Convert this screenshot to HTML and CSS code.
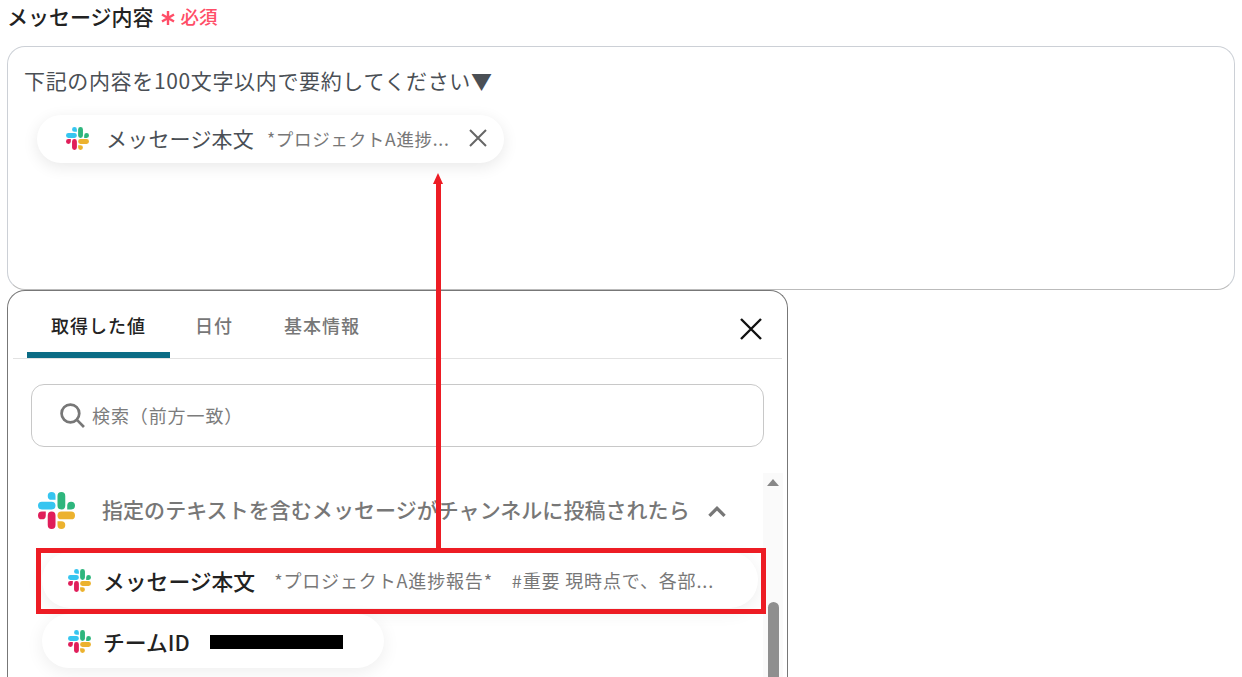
FILE: index.html
```html
<!DOCTYPE html>
<html lang="ja"><head>
<meta charset="utf-8">
<title>メッセージ内容</title>
<link rel="stylesheet" href="styles.css">
</head><body>

<svg class="defs" width="0" height="0">
	<symbol id="slack" viewBox="0 0 24 24">
		<path fill="#e01e5a" d="M5.042 15.165a2.528 2.528 0 0 1-2.52 2.523A2.528 2.528 0 0 1 0 15.165a2.527 2.527 0 0 1 2.522-2.52h2.52v2.52zM6.313 15.165a2.527 2.527 0 0 1 2.521-2.52 2.527 2.527 0 0 1 2.521 2.52v6.313A2.528 2.528 0 0 1 8.834 24a2.528 2.528 0 0 1-2.521-2.522v-6.313z"/>
		<path fill="#36c5f0" d="M8.834 5.042a2.528 2.528 0 0 1-2.521-2.52A2.528 2.528 0 0 1 8.834 0a2.528 2.528 0 0 1 2.521 2.522v2.52H8.834zM8.834 6.313a2.528 2.528 0 0 1 2.521 2.521 2.528 2.528 0 0 1-2.521 2.521H2.522A2.528 2.528 0 0 1 0 8.834a2.528 2.528 0 0 1 2.522-2.521h6.312z"/>
		<path fill="#2eb67d" d="M18.956 8.834a2.528 2.528 0 0 1 2.522-2.521A2.528 2.528 0 0 1 24 8.834a2.528 2.528 0 0 1-2.522 2.521h-2.522V8.834zM17.688 8.834a2.528 2.528 0 0 1-2.523 2.521 2.527 2.527 0 0 1-2.52-2.521V2.522A2.527 2.527 0 0 1 15.165 0a2.528 2.528 0 0 1 2.523 2.522v6.312z"/>
		<path fill="#ecb22e" d="M15.165 18.956a2.528 2.528 0 0 1 2.523 2.522A2.528 2.528 0 0 1 15.165 24a2.527 2.527 0 0 1-2.52-2.522v-2.522h2.52zM15.165 17.688a2.527 2.527 0 0 1-2.52-2.523 2.526 2.526 0 0 1 2.52-2.52h6.313A2.527 2.527 0 0 1 24 15.165a2.528 2.528 0 0 1-2.522 2.523h-6.313z"/>
	</symbol>
</svg>

<div class="page">
	<div class="label">
		<span>メッセージ内容</span>
		<svg class="req-star" viewBox="0 0 14 14"><path d="M7 0V14M1 3.5L13 10.5M13 3.5L1 10.5"/></svg>
		<span class="req">必須</span>
	</div>

	<div class="editor">
		<div class="editor-text">下記の内容を100文字以内で要約してください▼</div>
		<div class="chip">
			<svg class="icon-s"><use href="#slack"/></svg>
			<span class="chip-name">メッセージ本文</span>
			<span class="chip-val">*プロジェクトA進捗...</span>
			<svg class="chip-x" viewBox="0 0 18 18"><path d="M1 1L17 17M17 1L1 17"/></svg>
		</div>
	</div>

	<div class="panel">
		<div class="tabs">
			<div class="tab tab-on">取得した値</div>
			<div class="tab">日付</div>
			<div class="tab tab-last">基本情報</div>
			<svg class="panel-x" viewBox="0 0 22 22"><path d="M1 1L21 21M21 1L1 21"/></svg>
		</div>

		<div class="search">
			<svg class="search-icon" viewBox="0 0 24 24"><circle cx="10" cy="10" r="8.5"/><path d="M16 16L23 23"/></svg>
			<span>検索（前方一致）</span>
		</div>

		<div class="body">
			<div class="list">
				<div class="group">
					<svg class="icon-l"><use href="#slack"/></svg>
					<span class="group-title">指定のテキストを含むメッセージがチャンネルに投稿されたら</span>
					<svg class="chev" viewBox="0 0 18 12"><path d="M2 10L9 3L16 10"/></svg>
				</div>
				<div class="pill pill-wide">
					<svg class="icon-m"><use href="#slack"/></svg>
					<span class="pill-name">メッセージ本文</span>
					<span class="pill-val">*プロジェクトA進捗報告*　#重要 現時点で、各部...</span>
				</div>
				<div class="pill pill-short">
					<svg class="icon-m"><use href="#slack"/></svg>
					<span class="pill-name">チームID</span>
					<span class="masked"></span>
				</div>
			</div>
			<div class="scrollbar">
				<div class="scroll-up"></div>
				<div class="scroll-thumb"></div>
			</div>
		</div>
	</div>
</div>

<!-- annotation drawn on top of the screenshot -->
<div class="mark-box"></div>
<div class="mark-line"></div>
<div class="mark-head"></div>

</body></html>
```

FILE: styles.css
```css
html,body{margin:0;padding:0;height:100%;overflow:hidden;background:#fff;}
body{font-family:"Noto Sans CJK JP","Noto Sans",sans-serif;color:#222;}
.defs{position:absolute;}
.page{display:flex;flex-direction:column;padding:0 7px;}

.label{display:flex;align-items:center;height:46px;padding:0 0 14px 0;box-sizing:border-box;font-size:21px;font-weight:500;color:#222;}
.req-star{width:14px;height:14px;margin:4px 0 0 7px;}
.req-star path{stroke:#ff4d67;stroke-width:2.4;fill:none;}
.req{margin-left:6px;font-size:18.5px;color:#ff4d67;font-weight:500;}

.editor{height:244px;box-sizing:border-box;border:1px solid #ccd0d6;border-bottom-color:#bbb;border-radius:18px;padding:16px 16px 0;}
.editor-text{font-size:21px;letter-spacing:.65px;line-height:34px;color:#4a4f55;}
.chip{display:flex;align-items:center;width:467px;height:48px;box-sizing:border-box;margin:18px 0 0 13px;padding:0 17px 2px 29px;border-radius:24px;background:#fff;box-shadow:0 4px 16px rgba(0,0,0,.09);}
.icon-s{width:23px;height:23px;flex:none;}
.chip-name{margin-left:17px;font-size:21px;letter-spacing:.2px;color:#4a4f55;}
.chip-val{margin-left:13px;font-size:17.5px;letter-spacing:.7px;color:#777;white-space:nowrap;flex:1;}
.chip-x{width:18px;height:18px;flex:none;}
.chip-x path{stroke:#666;stroke-width:2;fill:none;}

.panel{width:781px;height:387px;box-sizing:border-box;border:1px solid #777;border-bottom:0;border-radius:18px 18px 0 0;padding:0 5px;overflow:hidden;}
.tabs{display:flex;align-items:stretch;height:67px;border-bottom:1px solid #e2e2e2;padding-left:14px;}
.tab{display:flex;align-items:center;justify-content:center;height:100%;padding:0 25px;font-size:18px;letter-spacing:1px;font-weight:500;color:#777;box-sizing:border-box;}
.tab-on{width:143px;padding:6px 0 0;color:#222;border-bottom:6px solid #0b6c85;border-radius:6px 6px 0 0;}
.tab-last{padding-left:26px;}
.panel-x{width:22px;height:22px;margin:27px 20px 0 auto;}
.panel-x path{stroke:#111;stroke-width:2.4;fill:none;}

.search{display:flex;align-items:center;height:63px;box-sizing:border-box;margin:25px 18px 0;border:1px solid #c8c8c8;border-radius:13px;padding:0 0 2px 28px;font-size:18px;letter-spacing:.9px;color:#7c7c7c;}
.search-icon{width:25px;height:25px;margin:2px 7px 0 0;}
.search-icon circle,.search-icon path{stroke:#777;stroke-width:2.6;fill:none;}

.body{display:flex;margin-top:26px;}
.list{flex:1;padding-left:25px;}
.group{display:flex;align-items:center;height:74px;}
.icon-l{width:37px;height:37px;flex:none;}
.group-title{margin:-2px 0 0 27px;font-size:21px;letter-spacing:.05px;font-weight:500;color:#777;}
.chev{width:20px;height:13px;margin:2px 0 0 17px;}
.chev path{stroke:#777;stroke-width:3;fill:none;}

.pill{display:flex;align-items:center;box-sizing:border-box;margin-left:4px;padding-left:26px;border-radius:28px;background:#fff;box-shadow:0 4px 18px rgba(0,0,0,.07);}
.pill-wide{width:716px;height:56px;margin-top:5px;}
.pill-short{width:342px;height:54px;margin-top:6px;}
.icon-m{width:23px;height:23px;flex:none;}
.pill-name{margin-left:12px;font-size:21.8px;font-weight:500;color:#222;}
.pill-val{margin-left:19px;font-size:18px;letter-spacing:.85px;color:#777;white-space:nowrap;}
.masked{width:133px;height:14px;margin:2px 0 0 20px;background:#000;}

.scrollbar{width:20px;flex:none;margin-right:-1px;background:#fafafa;height:210px;}
.scroll-up{width:0;height:0;margin:6px auto 0;border:6px solid transparent;border-top:0;border-bottom:7px solid #888;}
.scroll-thumb{width:11px;height:120px;margin:116px auto 0;border-radius:6px;background:#8f8f8f;}

.mark-box{position:absolute;left:36px;top:548px;width:730px;height:66px;box-sizing:border-box;border:5px solid #ed1c24;}
.mark-line{position:absolute;left:436px;top:183px;width:5px;height:365px;background:#ed1c24;}
.mark-head{position:absolute;left:433px;top:173px;width:0;height:0;border:5.5px solid transparent;border-top:0;border-bottom:11px solid #ed1c24;}
```
